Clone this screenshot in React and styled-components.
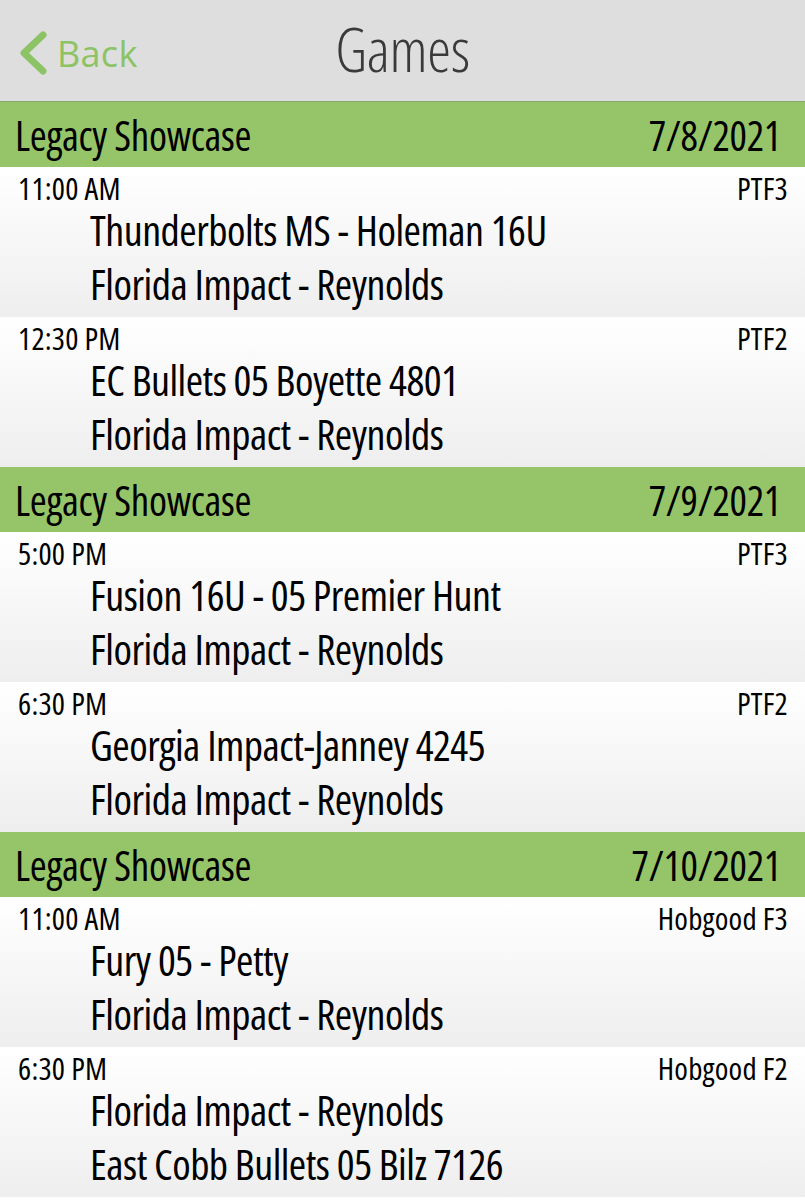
import React from 'react';
import styled, { createGlobalStyle } from 'styled-components';

const Global = createGlobalStyle`
  html, body { margin: 0; padding: 0; background: #ffffff; }
  body { font-family: 'Open Sans', 'Noto Sans', sans-serif; font-stretch: condensed; color: #000; }
`;

const Page = styled.div`
  width: 805px;
  display: flex;
  flex-direction: column;
`;

const NavBar = styled.header`
  height: 102px;
  background: #dedede;
  border-bottom: 1px solid #87a86a;
  display: grid;
  grid-template-columns: 1fr auto 1fr;
  align-items: center;
  box-sizing: border-box;
`;

const BackButton = styled.button`
  justify-self: start;
  display: flex;
  align-items: center;
  gap: 9px;
  margin-left: 18px;
  padding: 0;
  border: 0;
  background: none;
  color: #8cc465;
  font-family: 'Open Sans', sans-serif;
  font-stretch: normal;
  font-size: 36px;
  font-weight: 400;
  letter-spacing: 0.3px;
  cursor: pointer;
  margin-top: 5px;
`;

const Title = styled.h1`
  margin: 0 0 4px;
  font-family: 'Open Sans', sans-serif;
  font-stretch: condensed;
  font-weight: 300;
  font-size: 60px;
  color: #3a3a3a;
  letter-spacing: -0.3px;
`;

const SectionHeader = styled.div`
  height: 65px;
  background: #96c569;
  display: flex;
  align-items: center;
  justify-content: space-between;
  padding: 0 24px 0 15px;
  font-size: 41px;
  font-weight: 400;
  letter-spacing: -0.3px;
`;

const GameRow = styled.div`
  height: 150px;
  box-sizing: border-box;
  background: linear-gradient(#ffffff, #eeeeee);
  padding: 0 17px 0 18px;
  display: flex;
  flex-direction: column;
`;

const RowTop = styled.div`
  display: flex;
  justify-content: space-between;
  align-items: baseline;
  height: 36px;
`;

const Time = styled.span`
  font-size: 31px;
  letter-spacing: 0.2px;
`;

const Field = styled.span`
  font-size: 31px;
  letter-spacing: 0.2px;
`;

const Team = styled.div`
  margin-left: 72px;
  font-size: 42px;
  line-height: 54px;
  letter-spacing: -0.5px;
`;

const days = [
  {
    date: '7/8/2021',
    games: [
      { time: '11:00 AM', field: 'PTF3', teams: ['Thunderbolts MS - Holeman 16U', 'Florida Impact - Reynolds'] },
      { time: '12:30 PM', field: 'PTF2', teams: ['EC Bullets 05 Boyette 4801', 'Florida Impact - Reynolds'] },
    ],
  },
  {
    date: '7/9/2021',
    games: [
      { time: '5:00 PM', field: 'PTF3', teams: ['Fusion 16U - 05 Premier Hunt', 'Florida Impact - Reynolds'] },
      { time: '6:30 PM', field: 'PTF2', teams: ['Georgia Impact-Janney 4245', 'Florida Impact - Reynolds'] },
    ],
  },
  {
    date: '7/10/2021',
    games: [
      { time: '11:00 AM', field: 'Hobgood F3', teams: ['Fury 05 - Petty', 'Florida Impact - Reynolds'] },
      { time: '6:30 PM', field: 'Hobgood F2', teams: ['Florida Impact - Reynolds', 'East Cobb Bullets 05 Bilz 7126'] },
    ],
  },
];

const Chevron = () => (
  <svg width="30" height="44" viewBox="0 0 30 44" fill="none">
    <path d="M25 4 L6 22 L25 40" stroke="#8cc465" strokeWidth="7" strokeLinecap="round" strokeLinejoin="round" />
  </svg>
);

export default function App() {
  return (
    <Page>
      <Global />
      <NavBar>
        <BackButton>
          <Chevron />
          Back
        </BackButton>
        <Title>Games</Title>
        <div />
      </NavBar>
      {days.map((d) => (
        <React.Fragment key={d.date}>
          <SectionHeader>
            <span>Legacy Showcase</span>
            <span>{d.date}</span>
          </SectionHeader>
          {d.games.map((g, i) => (
            <GameRow key={i}>
              <RowTop>
                <Time>{g.time}</Time>
                <Field>{g.field}</Field>
              </RowTop>
              {g.teams.map((t) => (
                <Team key={t}>{t}</Team>
              ))}
            </GameRow>
          ))}
        </React.Fragment>
      ))}
    </Page>
  );
}
